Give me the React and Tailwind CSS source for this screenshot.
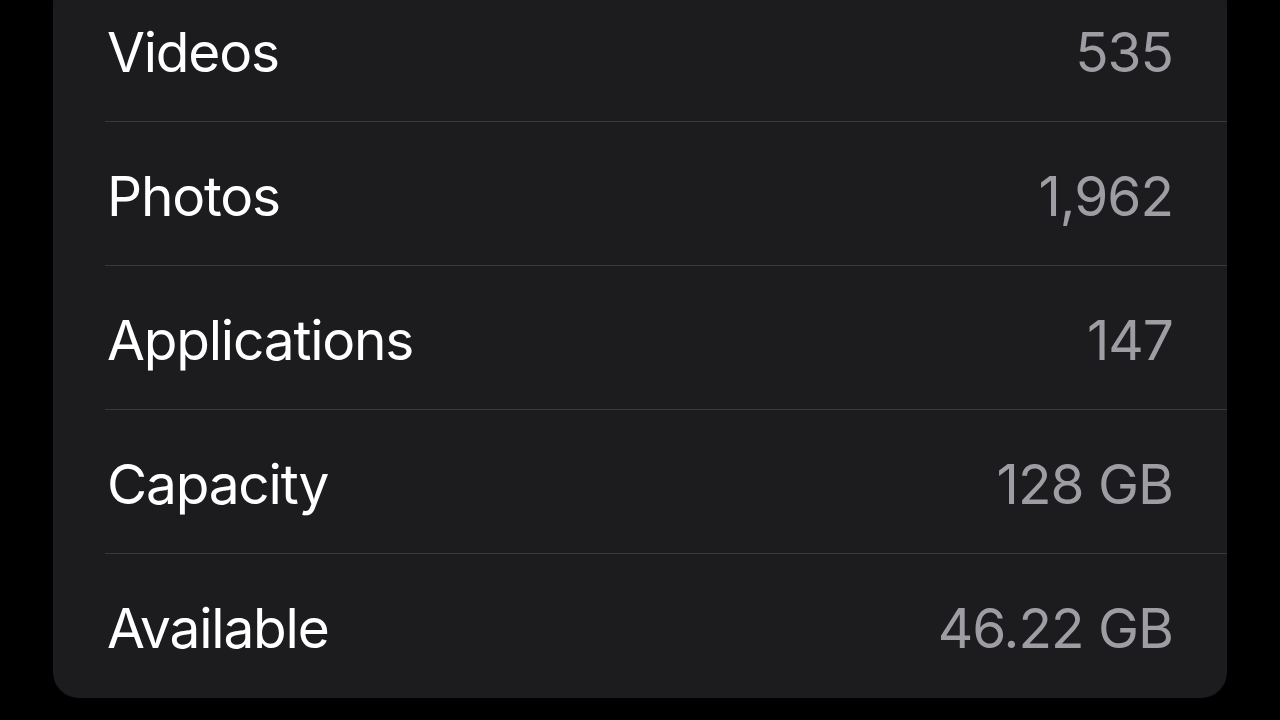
import React from 'react';

const rows = [
  { label: 'Videos', value: '535' },
  { label: 'Photos', value: '1,962' },
  { label: 'Applications', value: '147' },
  { label: 'Capacity', value: '128 GB' },
  { label: 'Available', value: '46.22 GB' },
];

export default function App() {
  return (
    <div className="h-[720px] w-[1280px] overflow-hidden bg-black" style={{ fontFamily: 'Inter, "Noto Sans", sans-serif' }}>
      <div className="ml-[53px] mt-[-22px] w-[1174px] overflow-hidden rounded-[26px] bg-[#1c1c1e]">
        {rows.map((row, i) => (
          <div key={row.label} className="flex h-[144px] pl-[52px]">
            <div
              className={`flex flex-1 items-center justify-between pr-[54px] pt-[5px] ${
                i < rows.length - 1 ? 'border-b border-[#3a3a3c]' : ''
              }`}
            >
              <span className="pl-[2px] text-[55px] leading-none tracking-[-1.2px] text-white">{row.label}</span>
              <span className="text-[55px] leading-none tracking-[-1px] text-[#9d9da3]">{row.value}</span>
            </div>
          </div>
        ))}
      </div>
    </div>
  );
}
